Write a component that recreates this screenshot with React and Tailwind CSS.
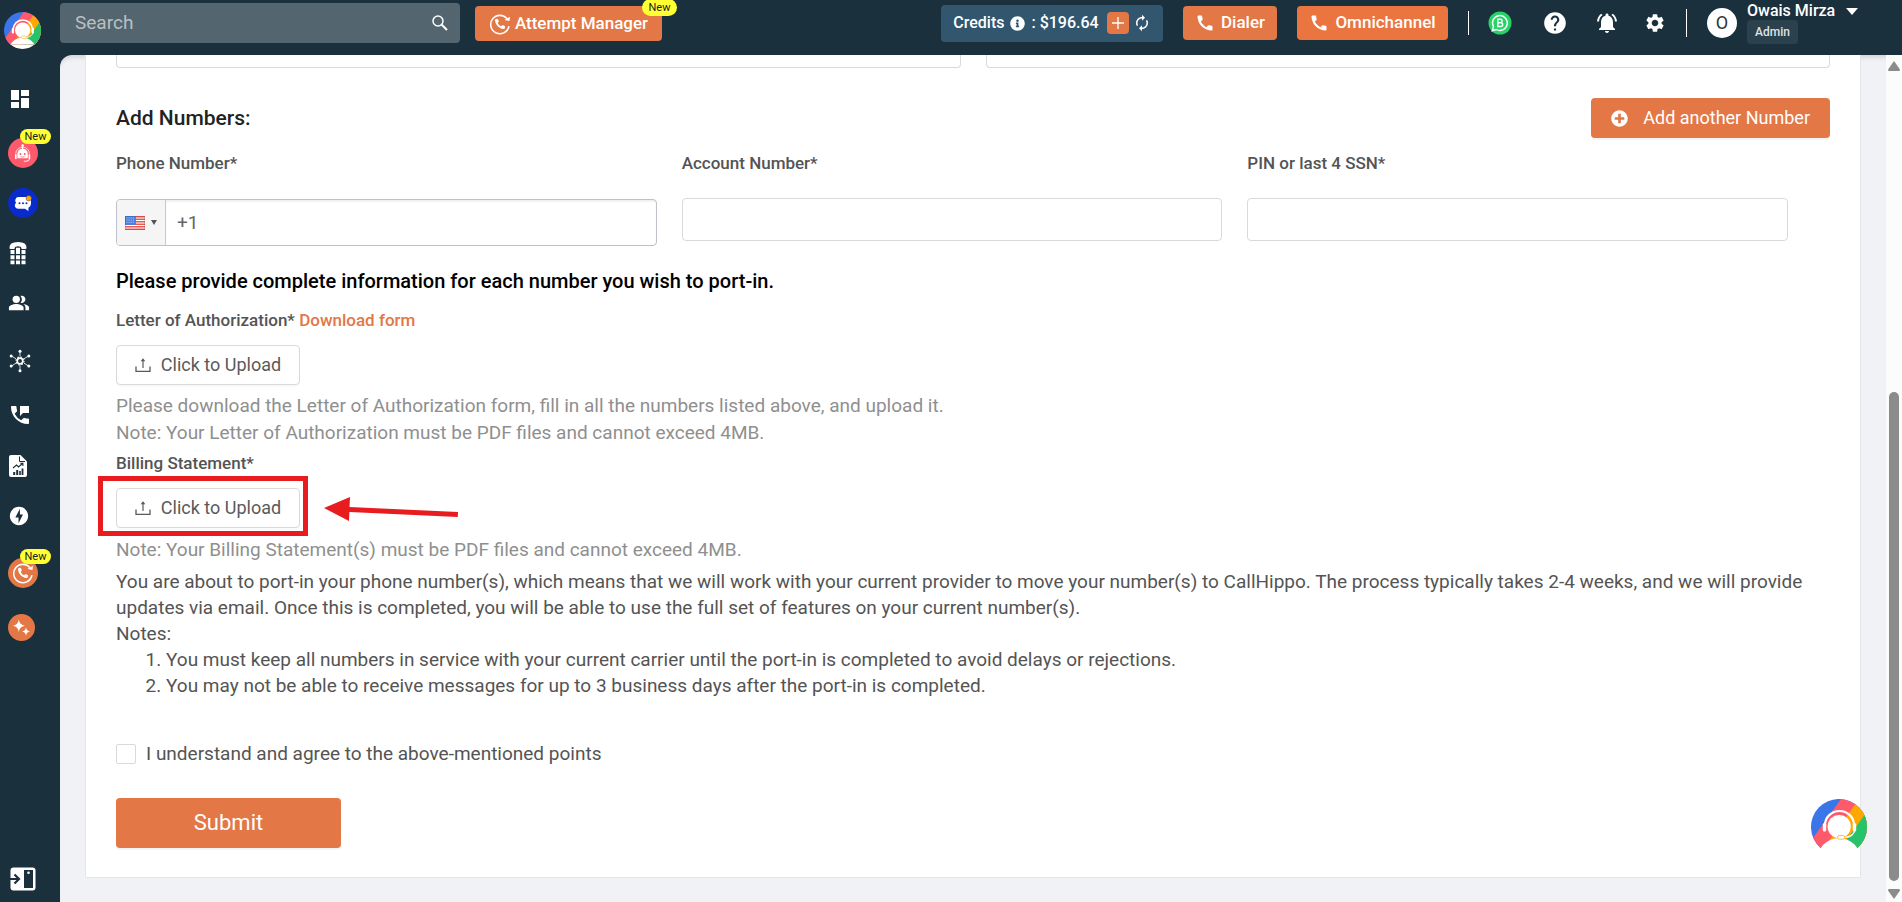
import React, { useId } from "react";
import {
  MdDashboard,
  MdPeopleAlt,
  MdPermPhoneMsg,
  MdOfflineBolt,
  MdCall,
  MdAutorenew,
  MdHelp,
  MdNotificationsActive,
  MdSettings,
} from "react-icons/md";
import { FaInfoCircle, FaPlusCircle } from "react-icons/fa";

function BrandMark({ className }) {
  const id = useId();
  return (
    <svg viewBox="0 0 56 56" className={className} aria-hidden="true">
      <clipPath id={id}>
        <path d="M9.500 49 A28 28 0 1 1 46.500 49 Z" />
      </clipPath>
      <path d="M9 48.500 A28.300 28.300 0 0 0 47 48.500 L28 39 Z" fill="#fff" />
      <g clipPath={`url(#${id})`}>
        <rect width="56" height="56" fill="#3b76e8" />
        <path d="M30 0 L60 -10 V60 H-13 Z" fill="#ff5a6b" />
        <path d="M48 0 H60 V60 H5 Z" fill="#ffa800" />
        <path d="M65 0 V60 H22 Z" fill="#27c26c" />
        <circle cx="28" cy="60.500" r="21.500" fill="#fff" />
        <path d="M14 30 V26 A14.500 14 0 0 1 43 26 V30" fill="none" stroke="#fff" strokeWidth="2.200" />
        <rect x="11.800" y="24" width="3.400" height="8.500" rx="1.600" fill="#fff" />
        <rect x="41.800" y="24" width="3.400" height="8.500" rx="1.600" fill="#fff" />
        <circle cx="28.200" cy="27.500" r="11.600" fill="#fff" />
        <path d="M44 31 C43 35 40 38 34 38.400" fill="none" stroke="#fff" strokeWidth="1.300" />
        <rect x="26.400" y="36.400" width="7.400" height="3.800" rx="1.900" fill="#fff" stroke="#ffb52e" strokeWidth="0.900" />
      </g>
    </svg>
  );
}

function RedialIcon({ className }) {
  return (
    <svg viewBox="0 0 24 24" className={className} aria-hidden="true" fill="none" stroke="#fff">
      <path d="M19.600 6.200 A10 10 0 1 0 21.600 15" strokeWidth="1.700" strokeLinecap="round" />
      <path d="M16.800 7.600 L22.400 8.800 L22.800 4 Z" fill="#fff" stroke="none" />
      <path
        d="M7.600 6.600 l2 -.3 1.200 2.900 -1.300 1.300 c.7 1.800 2 3.100 3.800 3.900 l1.400 -1.200 2.800 1.300 -.3 2 c-.2 .8 -.9 1.100 -1.700 1 C10.900 16.900 7.200 13.200 6.600 8.200 c-.1 -.8 .2 -1.400 1 -1.600 Z"
        fill="#fff"
        stroke="none"
      />
    </svg>
  );
}

function SearchIcon() {
  return (
    <svg viewBox="0 0 16 16" className="size-4" aria-hidden="true" fill="none" stroke="#fff">
      <circle cx="6" cy="6" r="5" strokeWidth="1.500" />
      <path d="M9.800 9.800 L15 15" strokeWidth="2" />
    </svg>
  );
}

function BotIcon() {
  return (
    <svg viewBox="0 0 30 30" className="size-[30px]" aria-hidden="true">
      <circle cx="15" cy="15" r="15" fill="#ff5a6b" />
      <circle cx="14.600" cy="7.600" r="1.300" fill="#fff" />
      <path d="M14.600 8 V11" stroke="#fff" strokeWidth="1" />
      <path d="M9.400 20.300 V15.800 a5.200 5.200 0 0 1 10.400 0 V20.300 Z" fill="#fff" />
      <path d="M7.800 19 V15.500 a6.800 6.300 0 0 1 13.600 0 V19" fill="none" stroke="#fff" strokeWidth=".7" />
      <path d="M7.800 16.500 V21 M21.400 16.500 V21" stroke="#fff" strokeWidth="1.600" />
      <path d="M21.400 21 q0 2 -3 2.200 h-2.500" fill="none" stroke="#fff" strokeWidth="1" />
      <circle cx="12.500" cy="16" r="1" fill="#ff5a6b" />
      <circle cx="16.700" cy="16" r="1" fill="#ff5a6b" />
      <path d="M12.800 18.600 q1.800 1.200 3.600 0" stroke="#ff5a6b" strokeWidth=".8" fill="none" />
    </svg>
  );
}

function ChatIcon() {
  return (
    <svg viewBox="0 0 30 30" className="size-[30px]" aria-hidden="true">
      <circle cx="15" cy="15" r="15" fill="#0a2bcc" />
      <path
        d="M10.500 9 H19 q4 0 4 4.500 V15.500 q0 3 -2.500 4.300 L20.300 23 L17 20.700 H10.500 Q6.800 20.700 6.800 17 L8 14.800 L7.200 13 Q7.500 9 10.500 9 Z"
        fill="#fff"
      />
      <g fill="#0a2bcc">
        <circle cx="11.500" cy="15.200" r="1" />
        <circle cx="15" cy="15.200" r="1" />
        <circle cx="18.500" cy="15.200" r="1" />
      </g>
      <circle cx="20.700" cy="10.300" r="2.700" fill="#ffa800" stroke="#0a2bcc" strokeWidth=".4" />
    </svg>
  );
}

function DeskPhoneIcon() {
  return (
    <svg viewBox="0 0 20 24" className="h-6 w-5" aria-hidden="true" fill="#fff">
      <path d="M1.500 7 Q1 1 10 1 T18.500 7 Q18.500 8 17.500 8 H14 Q13.300 8 13.300 7 Q13.300 5.200 10 5.200 T6.700 7 Q6.700 8 6 8 H2.500 Q1.500 8 1.500 7 Z" />
      <path d="M2.500 9h4v4h-4z M8 6.800h4V13H8z M13.500 9h4v4h-4z M2.500 14.200h4v4h-4z M8 14.200h4v4H8z M13.500 14.200h4v4h-4z M2.500 19.400h4v3.800h-4z M8 19.400h4v3.800H8z M13.500 19.400h4v3.800h-4z" />
    </svg>
  );
}

function HubIcon() {
  return (
    <svg viewBox="0 0 24 24" className="size-6" aria-hidden="true" fill="#fff" stroke="#fff">
      <path d="M12 2.500 V7.500 M12 16.500 V21.500 M3.500 7 L8 9.800 M20.500 7 L16 9.800 M3.500 17 L8 14.200 M20.500 17 L16 14.200" strokeWidth=".8" />
      <g stroke="none">
        <circle cx="12" cy="2.300" r="1.500" />
        <circle cx="12" cy="21.700" r="1.500" />
        <circle cx="3.200" cy="7" r="1.500" />
        <circle cx="20.800" cy="7" r="1.500" />
        <circle cx="3.200" cy="17" r="1.500" />
        <circle cx="20.800" cy="17" r="1.500" />
      </g>
      <circle cx="12" cy="12" r="2.800" fill="none" strokeWidth="1.700" />
      <circle cx="12" cy="12" r="4" fill="none" strokeWidth="1.100" strokeDasharray="1.570 1.570" />
    </svg>
  );
}

function ReportIcon() {
  return (
    <svg viewBox="0 0 20 24" className="h-6 w-5" aria-hidden="true">
      <path d="M3 1 H12.500 L19 7.500 V21 Q19 23 17 23 H3 Q1 23 1 21 V3 Q1 1 3 1 Z" fill="#fff" />
      <path d="M11.500 2.500 V7.500 H17" fill="none" stroke="#1b303d" strokeWidth="1" />
      <path d="M5 14 L8.500 11 L10.500 13 L14.500 9.500 M12.300 9.300 H14.900 V12" fill="none" stroke="#1b303d" strokeWidth="1.100" />
      <path d="M5.200 18h2v3h-2z M8.200 16h2v5h-2z M11.200 17h1.600v4h-1.600z M13.600 14.500h1.800V21h-1.800z" fill="#1b303d" />
    </svg>
  );
}

function SparkleIcon() {
  return (
    <svg viewBox="0 0 27 27" className="size-[27px]" aria-hidden="true">
      <circle cx="13.500" cy="13.500" r="13.500" fill="#e37746" />
      <path d="M10.800 5.500 Q11.500 11 17 11.700 Q11.500 12.400 10.800 18 Q10.100 12.400 5 11.700 Q10.100 11 10.800 5.500 Z" fill="#fff" />
      <path d="M18 13.200 Q18.500 17 22 17.500 Q18.500 18 18 21.700 Q17.500 18 14 17.500 Q17.500 17 18 13.200 Z" fill="#fff" />
    </svg>
  );
}

function ExpandIcon() {
  return (
    <svg viewBox="0 0 26 24" className="h-6 w-[26px]" aria-hidden="true">
      <rect x="0.500" y="0.500" width="25" height="23" rx="3" fill="#fff" />
      <path d="M0 12 H8 M4.500 7.500 L9 12 L4.500 16.500" fill="none" stroke="#1b303d" strokeWidth="2.200" />
      <rect x="14" y="3" width="9" height="18" fill="#1b303d" />
      <circle cx="18.500" cy="5.800" r="1.300" fill="#fff" />
    </svg>
  );
}

function WhatsAppBusinessIcon() {
  return (
    <svg viewBox="0 0 24 24" className="size-6" aria-hidden="true">
      <circle cx="12" cy="12" r="11.500" fill="#25d366" />
      <path d="M4.300 19.700 L5.500 15.700 A7.400 7.400 0 1 1 8.400 18.500 Z" fill="none" stroke="#fff" strokeWidth="1.400" />
      <path
        d="M9.800 8.200 H12.400 a1.700 1.700 0 0 1 0 3.500 H9.800 Z M9.800 11.700 H12.800 a1.900 1.900 0 0 1 0 3.800 H9.800 Z"
        fill="none"
        stroke="#fff"
        strokeWidth="1.400"
      />
    </svg>
  );
}

function UploadIcon() {
  return (
    <svg viewBox="0 0 16 16" className="size-4" aria-hidden="true" fill="none" stroke="#5a5a5a">
      <path d="M1 9.500 V14.300 H15 V9.500" strokeWidth="1.300" />
      <path d="M8 11 V3" strokeWidth="1.200" />
      <path d="M5.600 4.300 L8 1.200 L10.400 4.300 Z" fill="#5a5a5a" stroke="none" />
    </svg>
  );
}

function FlagUS() {
  return (
    <svg viewBox="0 0 20 14" className="h-[14px] w-5" aria-hidden="true">
      <rect width="20" height="14" fill="#fff" />
      <path d="M0 .7h20 M0 3.200h20 M0 5.700h20 M0 8.200h20 M0 10.700h20 M0 13.200h20" stroke="#ea5a55" strokeWidth="1.400" />
      <rect width="11" height="9" fill="#4a7ee0" />
      <path d="M1.500 2h8.500 M1.500 4.200h8.500 M1.500 6.400h8.500" stroke="#fff" strokeWidth=".7" strokeDasharray=".9 1.200" />
      <rect x=".5" y=".5" width="19" height="13" fill="none" stroke="#000" strokeOpacity=".12" />
    </svg>
  );
}

function NewBadge({ className }) {
  return (
    <span
      className={`absolute flex items-center justify-center rounded-full bg-[#ffff33] text-[11px] leading-none font-normal text-[#222] ${className}`}
    >
      New
    </span>
  );
}

function NavItem({ label, className = "", children }) {
  return (
    <a href="#" aria-label={label} className={`relative flex h-[30px] items-center ${className}`}>
      {children}
    </a>
  );
}

function Sidebar() {
  return (
    <aside className="flex w-[60px] shrink-0 flex-col justify-between bg-[#1b303d] text-white">
      <div>
        <a href="#" aria-label="Home" className="mt-3 ml-1 block size-[37px]">
          <BrandMark className="size-[37px]" />
        </a>
        <nav className="mt-[35px] flex flex-col gap-5 pl-2">
          <NavItem label="Dashboard"><MdDashboard className="size-6" /></NavItem>
          <NavItem label="AI agent" className="mt-1">
            <BotIcon />
            <NewBadge className="-top-[9px] left-3 h-[15px] w-[31px]" />
          </NavItem>
          <NavItem label="Chat"><ChatIcon /></NavItem>
          <NavItem label="Numbers"><DeskPhoneIcon /></NavItem>
          <NavItem label="Users"><MdPeopleAlt className="size-[22px]" /></NavItem>
          <NavItem label="Integrations" className="mt-2"><HubIcon /></NavItem>
          <NavItem label="Call logs" className="mt-1"><MdPermPhoneMsg className="size-6" /></NavItem>
          <NavItem label="Reports" className="mt-px"><ReportIcon /></NavItem>
          <NavItem label="Power features"><MdOfflineBolt className="size-[22px]" /></NavItem>
          <NavItem label="Attempt manager" className="mt-[7px]">
            <span className="flex size-[30px] items-center justify-center rounded-full bg-[#e37746]">
              <RedialIcon className="size-[22px]" />
            </span>
            <NewBadge className="-top-[9px] left-3 h-[15px] w-[31px]" />
          </NavItem>
          <NavItem label="AI features" className="mt-1"><SparkleIcon /></NavItem>
        </nav>
      </div>
      <button type="button" aria-label="Expand menu" className="mb-[11px] ml-[10px] w-[26px]">
        <ExpandIcon />
      </button>
    </aside>
  );
}

function Header() {
  return (
    <header className="relative z-10 flex h-[55px] shrink-0 items-start bg-[#1b303d] pr-11 text-white">
      <form className="mt-[3px] flex h-10 w-[400px] items-center rounded bg-[#53666f] pr-3 pl-[15px]">
        <input
          type="text"
          aria-label="Search"
          placeholder="Search"
          className="min-w-0 flex-1 bg-transparent text-[19px] text-white outline-none placeholder:text-[#bcbfc1]"
        />
        <button type="button" aria-label="Run search"><SearchIcon /></button>
      </form>
      <button
        type="button"
        className="relative mt-[6px] ml-[15px] flex h-[35px] w-[187px] items-center justify-center gap-1 rounded bg-[#e37746] text-[17px] font-medium"
      >
        <RedialIcon className="size-[22px]" />
        Attempt Manager
        <NewBadge className="-top-[7px] -right-[15px] h-[17px] w-[35px]" />
      </button>

      <div className="ml-auto flex h-[46px] items-center">
        <div className="flex h-[37px] w-[222px] items-center justify-center rounded bg-[#31566e] text-base font-medium">
          <span>Credits</span>
          <FaInfoCircle className="mx-[6px] size-[15px]" />
          <span>: $196.64</span>
          <button
            type="button"
            aria-label="Add credits"
            className="ml-2 flex size-[22px] items-center justify-center rounded bg-[#e37746]"
          >
            <svg viewBox="0 0 12 12" className="size-3" stroke="#fff" strokeWidth="1.300" aria-hidden="true">
              <path d="M6 0 V12 M0 6 H12" />
            </svg>
          </button>
          <button type="button" aria-label="Refresh credits" className="ml-1">
            <MdAutorenew className="size-[18px]" />
          </button>
        </div>
        <button type="button" className="ml-5 flex h-[34px] w-[94px] items-center justify-center gap-[6px] rounded bg-[#e37746] text-[17px] font-medium">
          <MdCall className="size-5" />
          Dialer
        </button>
        <button type="button" className="ml-5 flex h-[34px] w-[151px] items-center justify-center gap-[6px] rounded bg-[#ea7541] text-[17px] font-medium">
          <MdCall className="size-5" />
          Omnichannel
        </button>
        <span className="ml-5 h-6 w-px bg-white" />
        <button type="button" aria-label="WhatsApp Business" className="ml-[19px]"><WhatsAppBusinessIcon /></button>
        <button type="button" aria-label="Help" className="ml-[30px]"><MdHelp className="size-[26px]" /></button>
        <button type="button" aria-label="Notifications" className="ml-[27px]"><MdNotificationsActive className="size-6" /></button>
        <button type="button" aria-label="Settings" className="ml-[25px]"><MdSettings className="size-[22px]" /></button>
        <span className="ml-5 h-7 w-px bg-white" />
        <span className="ml-5 flex size-[30px] items-center justify-center rounded-full bg-white text-lg text-[#333]">O</span>
      </div>
      <div className="ml-[10px] w-[111px]">
        <button type="button" className="flex h-[22px] w-full items-center justify-between text-base font-medium">
          Owais Mirza
          <svg viewBox="0 0 12 7" className="h-[7px] w-3" fill="#fff" aria-hidden="true"><path d="M0 0 H12 L6 7 Z" /></svg>
        </button>
        <span className="-mt-[2px] flex h-6 w-[51px] items-center justify-center rounded bg-[#2b414d] text-xs font-medium text-[#dfe3e5]">
          Admin
        </span>
      </div>
    </header>
  );
}

function UploadButton({ id }) {
  return (
    <button
      id={id}
      type="button"
      className="flex h-10 w-[184px] items-center justify-center gap-[10px] rounded border border-[#d9d9d9] bg-white text-lg text-[#5a5a5a] shadow-[0_2px_0_rgba(0,0,0,0.02)]"
    >
      <UploadIcon />
      Click to Upload
    </button>
  );
}

function Callout() {
  return (
    <>
      <span className="pointer-events-none absolute -top-3 -left-[18px] h-[60px] w-[210px] border-[5px] border-[#e81c1f]" />
      <svg viewBox="0 0 136 28" className="pointer-events-none absolute top-[5px] left-[207px] h-7 w-[136px]" aria-hidden="true">
        <path d="M1 15 L27 4 L26.500 14 L135 19 L134.800 24 L26.400 19 L26 28 Z" fill="#e81c1f" />
      </svg>
    </>
  );
}

function PortForm() {
  return (
    <form className="rounded-b-xs border border-t-0 border-[#e4e5e7] bg-white px-[30px] pb-[29px] text-[19px] leading-[26px] text-[#545454]">
      <div className="grid grid-cols-2 gap-[25px]">
        <div className="h-[13px] rounded-b border border-t-0 border-[#d9d9d9]" />
        <div className="h-[13px] rounded-b border border-t-0 border-[#d9d9d9]" />
      </div>

      <div className="mt-[30px] flex items-center justify-between">
        <h2 className="text-[21px] font-medium text-[#222]">Add Numbers:</h2>
        <button
          type="button"
          className="flex h-10 w-[239px] items-center justify-between rounded bg-[#e37746] px-5 text-lg text-white shadow-[0_2px_0_rgba(0,0,0,0.04)]"
        >
          <FaPlusCircle className="size-[17px]" />
          Add another Number
        </button>
      </div>

      <div className="mt-3 grid grid-cols-3 gap-[25px] pr-[42px]">
        <div>
          <label htmlFor="phone" className="block text-[17px] leading-[26px] font-medium">Phone Number*</label>
          <div className="mt-[23px] flex h-[47px] overflow-hidden rounded border border-[#bfc0cc]">
            <button type="button" aria-label="Country: United States" className="flex w-12 items-center justify-center gap-[6px] bg-[#f5f5f5]">
              <FlagUS />
              <svg viewBox="0 0 6 5" className="h-[5px] w-[6px]" fill="#555" aria-hidden="true"><path d="M0 0 H6 L3 5 Z" /></svg>
            </button>
            <input
              id="phone"
              type="tel"
              defaultValue="+1"
              className="min-w-0 flex-1 border-l border-[#c8c9d0] px-[11px] text-[19px] text-[#666] shadow-[inset_0_2px_2px_rgba(0,0,0,0.06)] outline-none"
            />
          </div>
        </div>
        <div>
          <label htmlFor="account" className="block text-[17px] leading-[26px] font-medium">Account Number*</label>
          <input id="account" type="text" className="mt-[22px] block h-[43px] w-full rounded border border-[#d9d9d9] px-3 outline-none" />
        </div>
        <div>
          <label htmlFor="pin" className="block text-[17px] leading-[26px] font-medium">PIN or last 4 SSN*</label>
          <input id="pin" type="text" className="mt-[22px] block h-[43px] w-full rounded border border-[#d9d9d9] px-3 outline-none" />
        </div>
      </div>

      <h3 className="mt-[22px] text-xl leading-[26px] font-medium text-black">
        Please provide complete information for each number you wish to port-in.
      </h3>

      <p className="mt-[13px] text-[17px] leading-[26px] font-medium">
        <label htmlFor="loa">Letter of Authorization*</label>{" "}
        <a href="#" className="text-[#e37746]">Download form</a>
      </p>
      <div className="mt-3"><UploadButton id="loa" /></div>
      <p className="mt-[7px] leading-[27px] text-[#8f8f8f]">
        Please download the Letter of Authorization form, fill in all the numbers listed above, and upload it.
        <br />
        Note: Your Letter of Authorization must be PDF files and cannot exceed 4MB.
      </p>

      <label htmlFor="billing" className="mt-1 block text-[17px] leading-[26px] font-medium">Billing Statement*</label>
      <div className="relative mt-3">
        <UploadButton id="billing" />
        <Callout />
      </div>
      <p className="mt-2 leading-[27px] text-[#8f8f8f]">Note: Your Billing Statement(s) must be PDF files and cannot exceed 4MB.</p>

      <p className="mt-[6px]">
        You are about to port-in your phone number(s), which means that we will work with your current provider to move
        your number(s) to CallHippo. The process typically takes 2-4 weeks, and we will provide updates via email. Once
        this is completed, you will be able to use the full set of features on your current number(s).
      </p>
      <p>Notes:</p>
      <ol className="list-decimal pl-[50px]">
        <li>You must keep all numbers in service with your current carrier until the port-in is completed to avoid delays or rejections.</li>
        <li>You may not be able to receive messages for up to 3 business days after the port-in is completed.</li>
      </ol>

      <label className="mt-[42px] flex items-center gap-[10px]">
        <input type="checkbox" className="size-5 appearance-none rounded-xs border border-[#d9d9d9] bg-white" />
        I understand and agree to the above-mentioned points
      </label>

      <button
        type="submit"
        className="mt-[31px] flex h-[50px] w-[225px] items-center justify-center rounded bg-[#e37746] text-[22px] text-white shadow-[0_2px_0_rgba(0,0,0,0.04)]"
      >
        Submit
      </button>
    </form>
  );
}

function ScrollTrack() {
  return (
    <div className="flex w-4 shrink-0 flex-col items-center bg-[#fcfcfc] pt-[6px] pb-[3px]" aria-hidden="true">
      <svg viewBox="0 0 12 10" className="h-[10px] w-3" fill="#8b8b8b"><path d="M6 0 L12 8.500 Q12 10 11 10 H1 Q0 10 0 8.500 Z" /></svg>
      <div className="mt-2 flex w-full flex-1 flex-col items-center">
        <div className="grow-[16]" />
        <div className="w-[10px] grow-[25] rounded-full bg-[#8b8b8b]" />
      </div>
      <svg viewBox="0 0 12 10" className="mt-2 h-[10px] w-3" fill="#8b8b8b"><path d="M6 10 L12 1.500 Q12 0 11 0 H1 Q0 0 0 1.500 Z" /></svg>
    </div>
  );
}

export default function App() {
  return (
    <div className="flex min-h-screen bg-[#1b303d] font-['Roboto',sans-serif]">
      <Sidebar />
      <div className="flex min-w-0 flex-1 flex-col">
        <Header />
        <div className="flex flex-1 overflow-hidden rounded-tl-xl bg-[#f1f2f6] shadow-[inset_0_5px_5px_-3px_rgba(0,0,0,0.15)]">
          <main className="min-w-0 flex-1 px-[25px] pb-6">
            <PortForm />
          </main>
          <ScrollTrack />
        </div>
      </div>
      <button type="button" aria-label="Open support chat" className="fixed right-[35px] bottom-[47px] size-14">
        <BrandMark className="size-14" />
      </button>
    </div>
  );
}
